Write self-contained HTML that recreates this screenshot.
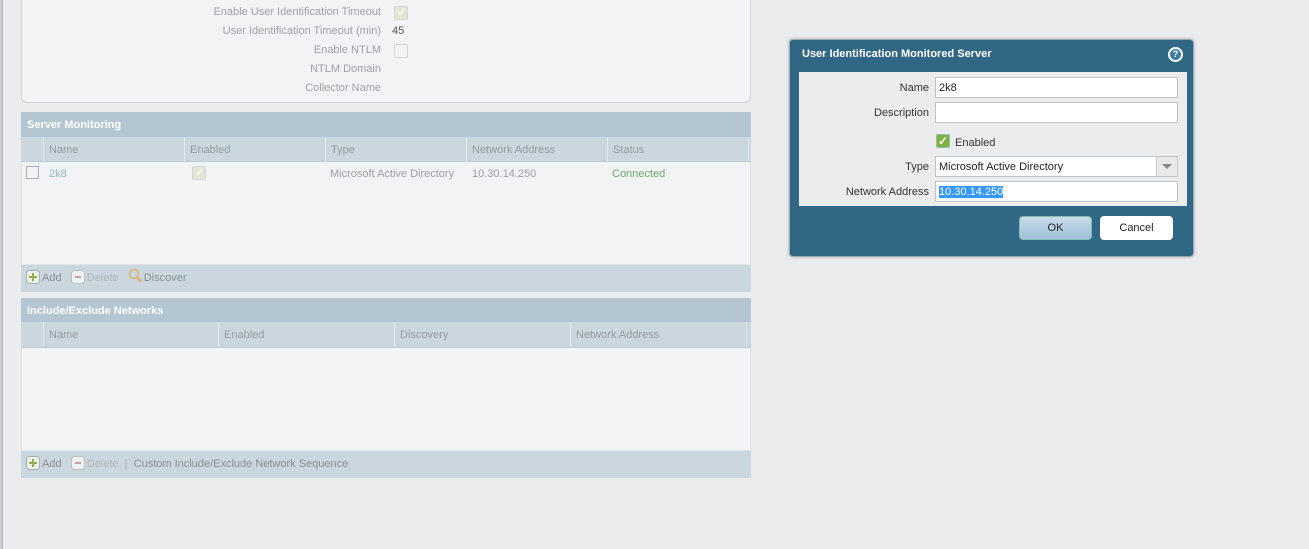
<!DOCTYPE html>
<html><head><meta charset="utf-8"><style>
*{box-sizing:border-box;margin:0;padding:0}
body{width:1309px;height:549px;background:#ebeced;font-family:"Liberation Sans",sans-serif;font-size:11px;position:relative;overflow:hidden;color:#8e959b}
.a{position:absolute}
.lbl{position:absolute;right:928px;text-align:right;color:#9da2a7;white-space:nowrap}
.hdr{position:absolute;left:21px;width:730px;background:#b4c6d2;color:#fff;font-weight:bold;padding-left:6px;padding-top:2px}
.colh{position:absolute;left:21px;width:730px;background:#cbd7df;border-bottom:1px solid #bccbd5}
.colh div{position:absolute;top:0;height:100%;border-left:1px solid #e2e9ee;padding-left:5px;line-height:27px;color:#939aa0}
.tb{position:absolute;left:21px;width:730px;background:#cbd7df;border-top:1px solid #dfe5e9}
.tb svg{vertical-align:-3px;margin-right:2px}
.cb{position:absolute;width:14px;height:14px;border:1px solid #d4d8d2;background:#e1e7d4;border-radius:2px}
.in{position:absolute;left:935px;width:243px;height:21px;background:#fff;border:1px solid #bfc3c6;color:#222;padding-left:3px;line-height:21px;font-size:11px}
</style></head><body>
<div class="a" style="left:0;top:0;width:3px;height:549px;background:#c8ccd0;border-right:1px solid #aeb4b9"></div>
<div class="a" style="left:21px;top:-6px;width:730px;height:109px;background:#f2f3f5;border:1px solid #d3d6d9;border-radius:6px"></div>
<div class="lbl" style="top:6px">Enable User Identification Timeout</div>
<div class="cb" style="left:394px;top:6px"><span style="position:absolute;left:2px;top:-2px;color:#fff;font-size:12px">✓</span></div>
<div class="lbl" style="top:25px">User Identification Timeout (min)</div>
<div class="a" style="left:392px;top:25px;color:#555">45</div>
<div class="lbl" style="top:44px">Enable NTLM</div>
<div class="cb" style="left:394px;top:44px;background:#f2f3f5"></div>
<div class="lbl" style="top:63px">NTLM Domain</div>
<div class="lbl" style="top:82px">Collector Name</div>

<div class="hdr" style="top:112px;height:25px;line-height:23px">Server Monitoring</div>
<div class="colh" style="top:137px;height:25px">
<div style="left:0;width:22px;border-left:none"></div>
<div style="left:22px">Name</div><div style="left:163px">Enabled</div><div style="left:304px">Type</div><div style="left:445px">Network Address</div><div style="left:586px">Status</div><div style="left:727px"></div>
</div>
<div class="a" style="left:21px;top:162px;width:730px;height:102px;background:#f2f3f5;border-left:1px solid #dde1e4;border-right:1px solid #dde1e4"></div>
<div class="a" style="left:26px;top:166px;width:13px;height:13px;border:1px solid #aab0b5;background:#f3f3f3"></div>
<div class="a" style="left:49px;top:168px;color:#8fb3d0">2k8</div>
<div class="cb" style="left:192px;top:166px"><span style="position:absolute;left:2px;top:-2px;color:#fff;font-size:12px">✓</span></div>
<div class="a" style="left:330px;top:168px;color:#9aa0a5">Microsoft Active Directory</div>
<div class="a" style="left:472px;top:168px;color:#9aa0a5">10.30.14.250</div>
<div class="a" style="left:612px;top:168px;color:#6aa86a">Connected</div>
<div class="tb" style="top:264px;height:28px;line-height:27px;padding-left:5px;color:#888e93">
<svg width="14" height="14"><rect x=".5" y=".5" width="13" height="13" rx="3" fill="#eef1ea" stroke="#a8b0b5"/><path d="M7 3v8M3 7h8" stroke="#8fb04a" stroke-width="2"/></svg>Add &nbsp;&nbsp;<svg width="14" height="14"><rect x=".5" y=".5" width="13" height="13" rx="3" fill="#eef1f2" stroke="#b8bec2"/><path d="M4 7h6" stroke="#c9a0a0" stroke-width="2"/></svg><span style="color:#b0b6ba">Delete</span> &nbsp;&nbsp;<svg width="14" height="16"><circle cx="6" cy="6" r="4.5" fill="none" stroke="#d9b66a" stroke-width="1.5"/><path d="M9 9l4 5" stroke="#d9b66a" stroke-width="2.5"/></svg>Discover</div>

<div class="hdr" style="top:298px;height:24px;line-height:22px">Include/Exclude Networks</div>
<div class="colh" style="top:322px;height:26px">
<div style="left:0;width:22px;border-left:none"></div>
<div style="left:22px">Name</div><div style="left:197px">Enabled</div><div style="left:373px">Discovery</div><div style="left:549px">Network Address</div><div style="left:725px"></div>
</div>
<div class="a" style="left:21px;top:348px;width:730px;height:102px;background:#f3f4f6;border-left:1px solid #dde1e4;border-right:1px solid #dde1e4"></div>
<div class="tb" style="top:450px;height:28px;line-height:27px;padding-left:5px;color:#888e93">
<svg width="14" height="14"><rect x=".5" y=".5" width="13" height="13" rx="3" fill="#eef1ea" stroke="#a8b0b5"/><path d="M7 3v8M3 7h8" stroke="#8fb04a" stroke-width="2"/></svg>Add &nbsp;&nbsp;<svg width="14" height="14"><rect x=".5" y=".5" width="13" height="13" rx="3" fill="#eef1f2" stroke="#b8bec2"/><path d="M4 7h6" stroke="#c9a0a0" stroke-width="2"/></svg><span style="color:#b0b6ba">Delete</span> &nbsp;<span style="color:#aab">|</span>&nbsp; Custom Include/Exclude Network Sequence</div>

<div class="a" style="left:789px;top:39px;width:405px;height:218px;background:#306785;border:1px solid #9aa9b4;border-radius:4px;box-shadow:0 0 3px #aab"></div>
<div class="a" style="left:802px;top:48px;color:#fff;font-weight:bold;font-size:11px">User Identification Monitored Server</div>
<div class="a" style="left:1168px;top:47px;width:15px;height:15px;border-radius:50%;background:#fff;"><div style="position:absolute;left:2px;top:2px;width:11px;height:11px;border-radius:50%;background:#3a7ba8;color:#fff;font-size:9px;font-weight:bold;text-align:center;line-height:11px">?</div></div>
<div class="a" style="left:799px;top:72px;width:388px;height:134px;background:#ebeced"></div>
<div class="a" style="right:380px;top:82px;color:#333">Name</div>
<div class="in" style="top:77px">2k8</div>
<div class="a" style="right:380px;top:107px;color:#333">Description</div>
<div class="in" style="top:102px"></div>
<div class="a" style="left:936px;top:134px;width:14px;height:14px;background:#7cb342;border:1px solid #9ba;border-radius:2px;color:#fff;font-size:12px;line-height:12px;text-align:center;font-weight:bold">✓</div>
<div class="a" style="left:955px;top:137px;color:#333">Enabled</div>
<div class="a" style="right:380px;top:161px;color:#333">Type</div>
<div class="in" style="top:156px">Microsoft Active Directory<div style="position:absolute;right:0;top:0;width:21px;height:19px;background:#e8e9ea;border-left:1px solid #ccc"><div style="position:absolute;left:5px;top:7px;border-left:5px solid transparent;border-right:5px solid transparent;border-top:5px solid #888"></div></div></div>
<div class="a" style="right:380px;top:186px;color:#333">Network Address</div>
<div class="in" style="top:181px"><span style="background:#3399ff;color:#fff">10.30.14.250</span></div>
<div class="a" style="left:1019px;top:216px;width:73px;height:24px;background:linear-gradient(#c9dcea,#9dbfd7);border:1px solid #8bb;border-radius:4px;text-align:center;line-height:23px;color:#222">OK</div>
<div class="a" style="left:1100px;top:216px;width:73px;height:24px;background:#fff;border-radius:4px;text-align:center;line-height:24px;color:#222">Cancel</div>
</body></html>
